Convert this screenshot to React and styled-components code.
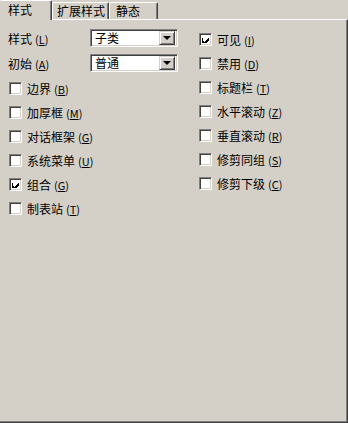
import styled, { createGlobalStyle } from "styled-components";

const GlobalStyle = createGlobalStyle`
  html, body {
    margin: 0;
    padding: 0;
    background: #d4d0c8;
  }
  body {
    font-family: "Noto Sans CJK SC", "Liberation Sans", sans-serif;
    font-size: 12px;
    color: #000;
  }
`;

const Window = styled.div`
  width: 348px;
  height: 423px;
  display: flex;
  flex-direction: column;
  background: #d4d0c8;
  overflow: hidden;
`;

const TabStrip = styled.div`
  height: 19px;
  display: flex;
  align-items: flex-end;
  position: relative;
  z-index: 2;
`;

const Tab = styled.div`
  box-sizing: border-box;
  width: ${(p) => p.$width}px;
  height: ${(p) => (p.$active ? 20 : 17)}px;
  margin-bottom: ${(p) => (p.$active ? -1 : 0)}px;
  padding-left: ${(p) => p.$pad}px;
  display: flex;
  align-items: center;
  line-height: 12px;
  background: #d4d0c8;
  border-top: 1px solid #fff;
  border-left: ${(p) => (p.$active ? "none" : "1px solid #fff")};
  border-right: 1px solid #404040;
  box-shadow: inset -1px 0 0 #808080;
  border-radius: 2px 2px 0 0;
  padding-bottom: ${(p) => (p.$active ? 2 : 0)}px;
`;

const Panel = styled.div`
  flex: 1;
  box-sizing: border-box;
  border-top: 1px solid #fff;
  border-right: 1px solid #404040;
  border-bottom: 1px solid #404040;
  box-shadow: inset -1px -1px 0 #808080;
  display: grid;
  grid-template-columns: 190px 1fr;
  padding: 9px 0 0 8px;
`;

const Column = styled.div`
  display: flex;
  flex-direction: column;
  padding-top: ${(p) => p.$top || 0}px;
`;

const FieldRow = styled.div`
  height: 18px;
  display: flex;
  align-items: center;
  margin-bottom: 7px;
`;

const FieldLabel = styled.span`
  width: 82px;
  white-space: nowrap;
`;

const Combo = styled.div`
  box-sizing: border-box;
  width: 88px;
  height: 18px;
  background: #fff;
  border-top: 1px solid #808080;
  border-left: 1px solid #808080;
  border-right: 1px solid #fff;
  border-bottom: 1px solid #fff;
  box-shadow: inset 1px 1px 0 #404040, inset -1px -1px 0 #d4d0c8;
  display: flex;
  align-items: center;
  padding: 2px;
`;

const ComboText = styled.span`
  flex: 1;
  padding-left: 2px;
  line-height: 12px;
`;

const ComboButton = styled.div`
  box-sizing: border-box;
  width: 16px;
  height: 14px;
  background: #d4d0c8;
  border-top: 1px solid #d4d0c8;
  border-left: 1px solid #d4d0c8;
  border-right: 1px solid #404040;
  border-bottom: 1px solid #404040;
  box-shadow: inset 1px 1px 0 #fff, inset -1px -1px 0 #808080;
  display: flex;
  align-items: center;
  justify-content: center;
`;

const Arrow = styled.div`
  width: 0;
  height: 0;
  border-left: 4px solid transparent;
  border-right: 4px solid transparent;
  border-top: 4px solid #000;
`;

const CheckRow = styled.div`
  height: 13px;
  display: flex;
  align-items: center;
  margin-bottom: 11px;
  white-space: nowrap;
`;

const Box = styled.div`
  box-sizing: border-box;
  width: 13px;
  height: 13px;
  flex: none;
  margin: 0 5px 0 1px;
  background: #fff;
  border-top: 1px solid #808080;
  border-left: 1px solid #808080;
  border-right: 1px solid #fff;
  border-bottom: 1px solid #fff;
  box-shadow: inset 1px 1px 0 #404040, inset -1px -1px 0 #d4d0c8;
  display: flex;
  align-items: center;
  justify-content: center;
`;

const Key = styled.span`
  font-size: 11px;
  margin-left: 3px;
`;

const Check = () => (
  <svg width="7" height="7" viewBox="0 0 7 7" shapeRendering="crispEdges">
    <path d="M0 2h1v3h1v1h1v-1h1v-1h1v-1h1v-1h1v3h-1v1h-1v1h-1v1h-1v1h-1v-1h-1v-1h-1z" fill="#000" />
  </svg>
);

const Mnemonic = ({ k }) => (
  <Key>
    (<u>{k}</u>)
  </Key>
);

const CheckItem = ({ label, k, checked }) => (
  <CheckRow>
    <Box>{checked && <Check />}</Box>
    <span>{label}</span>
    <Mnemonic k={k} />
  </CheckRow>
);

const leftChecks = [
  ["边界", "B"],
  ["加厚框", "M"],
  ["对话框架", "G"],
  ["系统菜单", "U"],
  ["组合", "G", true],
  ["制表站", "T"],
];

const rightChecks = [
  ["可见", "I", true],
  ["禁用", "D"],
  ["标题栏", "T"],
  ["水平滚动", "Z"],
  ["垂直滚动", "R"],
  ["修剪同组", "S"],
  ["修剪下级", "C"],
];

const App = () => (
  <Window>
    <GlobalStyle />
    <TabStrip>
      <Tab $active $width={52} $pad={8}>样式</Tab>
      <Tab $width={57} $pad={4}>扩展样式</Tab>
      <Tab $width={49} $pad={6}>静态</Tab>
    </TabStrip>
    <Panel>
      <Column>
        <FieldRow>
          <FieldLabel>
            样式<Mnemonic k="L" />
          </FieldLabel>
          <Combo>
            <ComboText>子类</ComboText>
            <ComboButton>
              <Arrow />
            </ComboButton>
          </Combo>
        </FieldRow>
        <FieldRow>
          <FieldLabel>
            初始<Mnemonic k="A" />
          </FieldLabel>
          <Combo>
            <ComboText>普通</ComboText>
            <ComboButton>
              <Arrow />
            </ComboButton>
          </Combo>
        </FieldRow>
        <Column $top={3}>
          {leftChecks.map(([l, k, c]) => (
            <CheckItem key={l} label={l} k={k} checked={c} />
          ))}
        </Column>
      </Column>
      <Column $top={4}>
        {rightChecks.map(([l, k, c]) => (
          <CheckItem key={l} label={l} k={k} checked={c} />
        ))}
      </Column>
    </Panel>
  </Window>
);

export default App;
